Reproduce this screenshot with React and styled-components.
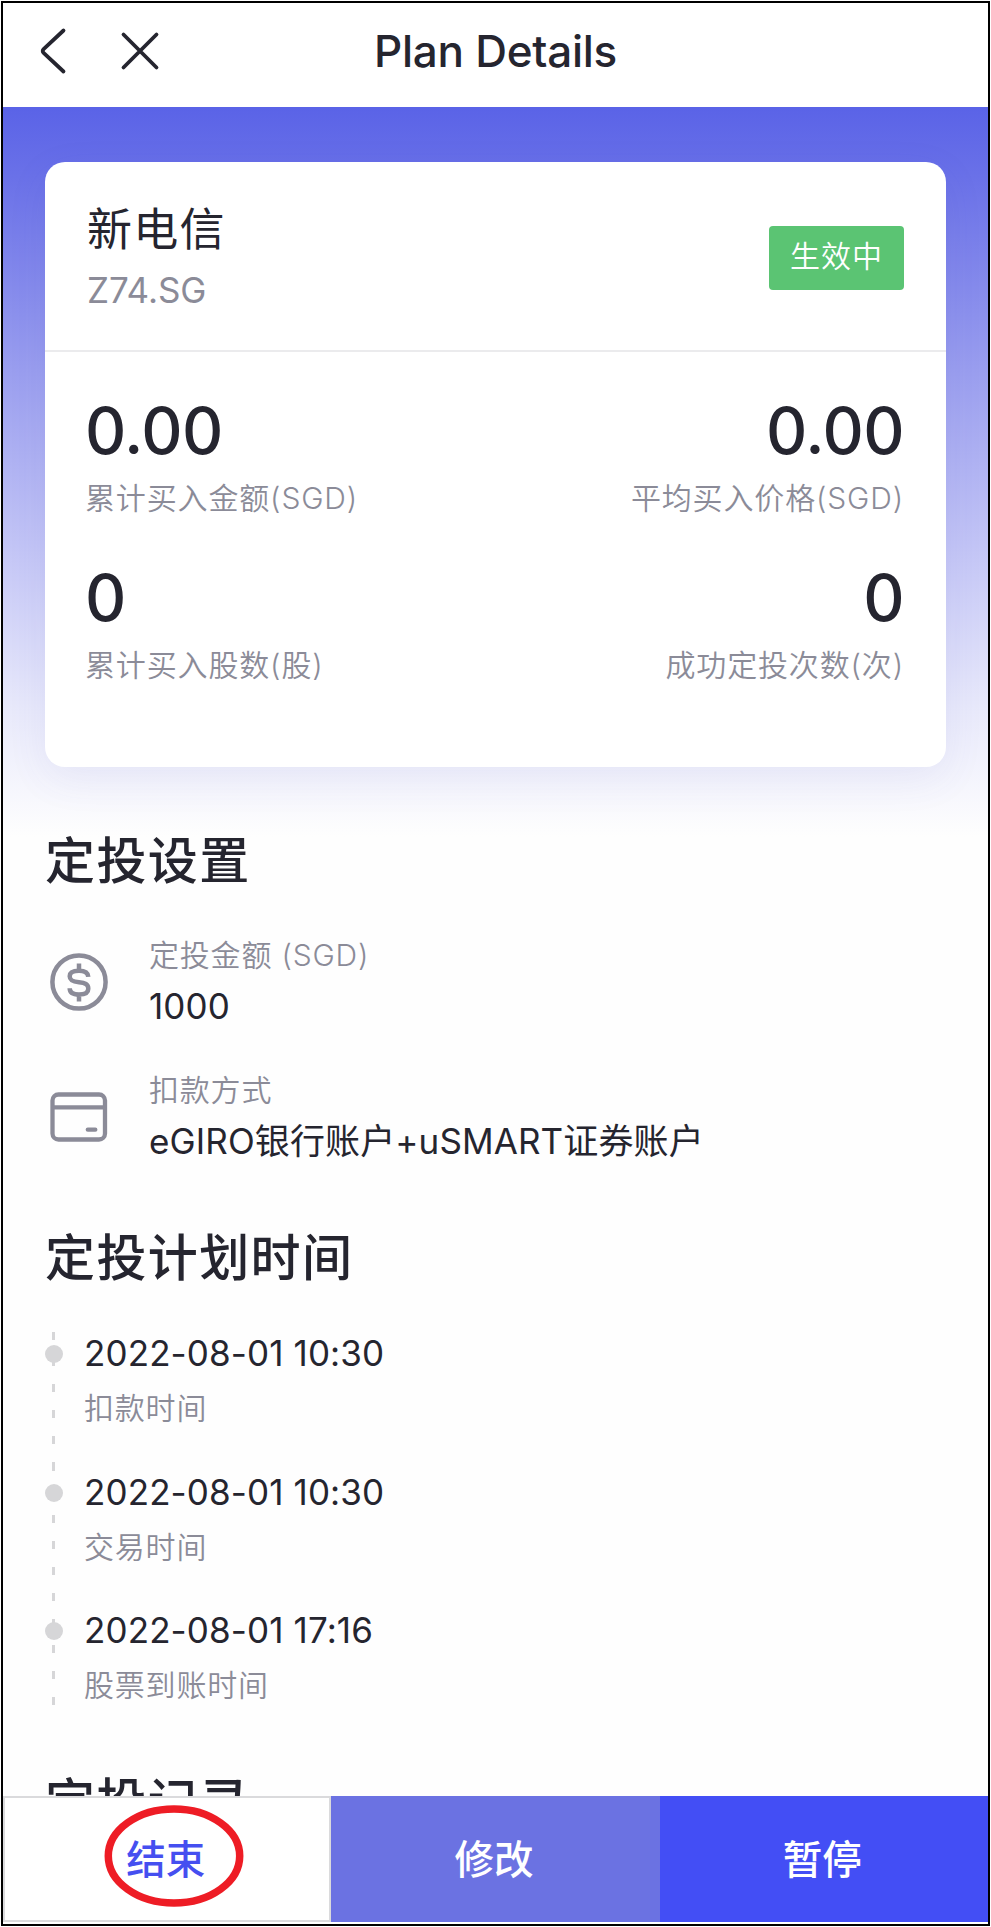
import React from "react";
import styled, { createGlobalStyle } from "styled-components";

const Global = createGlobalStyle`
  * { box-sizing: border-box; }
  body {
    margin: 0;
    background: #fff;
    color: #25252f;
    font-family: Inter, "Noto Sans CJK SC", sans-serif;
    font-weight: 400;
  }
`;

const Frame = styled.div`
  width: 989px;
  height: 1925px;
  margin: 1px;
  border: 2px solid #000;
  background: #fefefe;
  display: flex;
  flex-direction: column;
  overflow: hidden;
`;

const Header = styled.header`
  flex: none;
  height: 104px;
  display: grid;
  grid-template-columns: 1fr auto 1fr;
  align-items: start;
  background: #fff;
`;

const HeaderActions = styled.div`
  display: flex;
  align-items: center;
  gap: 51px;
  height: 96px;
  padding-left: 34px;
`;

const PageTitle = styled.h1`
  margin: 0;
  font-size: 44px;
  font-weight: 500;
  line-height: 96px;
  letter-spacing: -0.25px;
`;

const Scroll = styled.main`
  flex: 1;
  min-height: 0;
  overflow: hidden;
  padding: 55px 42px 0;
  background: linear-gradient(#5a63e7 0, #6a71e8 70px, #9a9eef 263px, #c3c5f6 440px, #e8e9fb 600px, #fefefe 730px);
`;

const Card = styled.section`
  height: 605px;
  border-radius: 20px;
  background: #fff;
  box-shadow: 0 12px 40px rgba(80, 80, 180, 0.08);
`;

const CardHead = styled.div`
  height: 190px;
  padding: 38px 42px 0 42px;
  border-bottom: 2px solid #ebebed;
  display: flex;
  justify-content: space-between;
`;

const StockName = styled.div`
  font-size: 45px;
  line-height: 60px;
  letter-spacing: 1.2px;
`;

const StockCode = styled.div`
  margin-top: 10px;
  font-size: 35px;
  line-height: 40px;
  letter-spacing: -0.1px;
  color: #8b8b98;
`;

const Badge = styled.span`
  width: 135px;
  height: 64px;
  margin-top: 26px;
  border-radius: 4px;
  background: #5bc473;
  color: #fff;
  font-size: 30px;
  font-weight: 350;
  line-height: 60px;
  letter-spacing: 1px;
  text-align: center;
`;

const Stats = styled.div`
  display: grid;
  grid-template-columns: auto auto;
  justify-content: space-between;
  row-gap: 45px;
  padding: 44px 42px 0 40px;
`;

const Stat = styled.div`
  text-align: ${(p) => (p.$end ? "right" : "left")};
`;

const StatValue = styled.div`
  font-size: 64px;
  font-weight: 500;
  line-height: 70px;
  letter-spacing: -0.5px;
`;

const Label = styled.div`
  font-size: 30px;
  font-weight: 350;
  line-height: 40px;
  letter-spacing: 0.8px;
  color: #8b8b98;
`;

const StatLabel = styled(Label)`
  margin-top: 12px;
  letter-spacing: 0.85px;
`;

const SectionTitle = styled.h2`
  margin: ${(p) => p.$top}px 0 0;
  font-size: 50px;
  font-weight: 500;
  line-height: 64px;
  letter-spacing: 1.4px;
`;

const SettingRow = styled.div`
  display: flex;
  align-items: center;
  gap: 41px;
  height: 100px;
  margin-top: ${(p) => p.$top}px;
  padding-left: 3px;
`;

const Value = styled.div`
  font-size: 35px;
  line-height: 44px;
  letter-spacing: 0.12px;
`;

const SettingText = styled.div`
  display: flex;
  flex-direction: column;
  gap: 9px;
  padding-bottom: 1px;
`;

const Timeline = styled.div`
  height: 375px;
  margin-top: 41px;
  padding-left: 7px;
  background: repeating-linear-gradient(#d6d6d8 0 8px, transparent 8px 26.1px) 7px 1px / 3px 100% no-repeat;
`;

const Event = styled.div`
  position: relative;
  height: 138.6px;
  padding-left: 32px;

  &::before {
    content: "";
    position: absolute;
    left: -7px;
    top: 14px;
    width: 18px;
    height: 18px;
    border-radius: 50%;
    background: #d6d6d8;
  }
`;

const EventLabel = styled(Label)`
  margin-top: 13px;
`;

const Actions = styled.footer`
  flex: none;
  height: 128px;
  padding-bottom: 2px;
  display: grid;
  grid-template-columns: repeat(3, 1fr);
`;

const Action = styled.button`
  position: relative;
  margin: 0;
  padding: 0 3px 6px 0;
  border: ${(p) => (p.$outlined ? "2px solid #dadadc" : "0")};
  background: ${(p) => p.$bg};
  color: ${(p) => p.$color};
  font: 500 39.5px Inter, "Noto Sans CJK SC", sans-serif;
`;

const Ring = styled.svg`
  position: absolute;
  left: 97.5px;
  top: 5px;
`;

const Back = () => (
  <svg width="32" height="50" viewBox="0 0 32 50" fill="none" stroke="#25252f" strokeWidth="3.8" strokeLinecap="round" strokeLinejoin="round">
    <path d="M26.5 4.5 6.6 23.2Q4.8 25 6.6 26.8L26.5 45.5" />
  </svg>
);

const Close = () => (
  <svg width="40" height="40" viewBox="0 0 40 40" fill="none" stroke="#25252f" strokeWidth="3.8" strokeLinecap="round">
    <path d="M3.5 3.5 36.5 36.5M36.5 3.5 3.5 36.5" />
  </svg>
);

const Dollar = () => (
  <svg width="60" height="60" viewBox="0 0 60 60" fill="none" stroke="#8b8b98" strokeWidth="4.5">
    <circle cx="31" cy="30" r="26.6" />
    <path d="M31 11.5v7M31 43v6.5M40.3 24.8C40 20.5 36.5 18.8 31 18.8S21.7 20.5 21.7 24.3C21.7 28.5 25 29.7 31 30.3S40.3 32 40.3 36.7C40.3 41 36.5 42.5 31 42.5S21.7 40.5 21.7 36.2" />
  </svg>
);

const BankCard = () => (
  <svg width="60" height="60" viewBox="0 0 60 60" fill="none" stroke="#8b8b98" strokeWidth="4.3">
    <rect x="4.5" y="7.5" width="52.5" height="45" rx="6" />
    <path d="M4.5 20.3H57" />
    <path d="M39.8 42.7h7.5" strokeLinecap="round" />
  </svg>
);

const stats = [
  ["0.00", "累计买入金额(SGD)"],
  ["0.00", "平均买入价格(SGD)"],
  ["0", "累计买入股数(股)"],
  ["0", "成功定投次数(次)"],
];

const events = [
  ["2022-08-01 10:30", "扣款时间"],
  ["2022-08-01 10:30", "交易时间"],
  ["2022-08-01 17:16", "股票到账时间"],
];

export default function App() {
  return (
    <>
      <Global />
      <Frame>
        <Header>
          <HeaderActions>
            <Back />
            <Close />
          </HeaderActions>
          <PageTitle>Plan Details</PageTitle>
        </Header>
        <Scroll>
          <Card>
            <CardHead>
              <div>
                <StockName>新电信</StockName>
                <StockCode>Z74.SG</StockCode>
              </div>
              <Badge>生效中</Badge>
            </CardHead>
            <Stats>
              {stats.map(([value, label], i) => (
                <Stat key={label} $end={i % 2 === 1}>
                  <StatValue>{value}</StatValue>
                  <StatLabel>{label}</StatLabel>
                </Stat>
              ))}
            </Stats>
          </Card>
          <SectionTitle $top={62}>定投设置</SectionTitle>
          <SettingRow $top={39}>
            <Dollar />
            <SettingText>
              <Label>定投金额 (SGD)</Label>
              <Value>1000</Value>
            </SettingText>
          </SettingRow>
          <SettingRow $top={35}>
            <BankCard />
            <SettingText>
              <Label>扣款方式</Label>
              <Value>eGIRO银行账户+uSMART证券账户</Value>
            </SettingText>
          </SettingRow>
          <SectionTitle $top={59}>定投计划时间</SectionTitle>
          <Timeline>
            {events.map(([time, label]) => (
              <Event key={label}>
                <Value>{time}</Value>
                <EventLabel>{label}</EventLabel>
              </Event>
            ))}
          </Timeline>
          <SectionTitle $top={64}>定投记录</SectionTitle>
        </Scroll>
        <Actions>
          <Action $outlined $bg="#fff" $color="#454ff0">
            结束
            <Ring width="144" height="106" viewBox="0 0 144 106" fill="none" stroke="#ee1c25" strokeWidth="7.5">
              <ellipse cx="71" cy="53" rx="65.7" ry="47" />
            </Ring>
          </Action>
          <Action $bg="#6b72e2" $color="#fff">修改</Action>
          <Action $bg="#434ef5" $color="#fff">暂停</Action>
        </Actions>
      </Frame>
    </>
  );
}
